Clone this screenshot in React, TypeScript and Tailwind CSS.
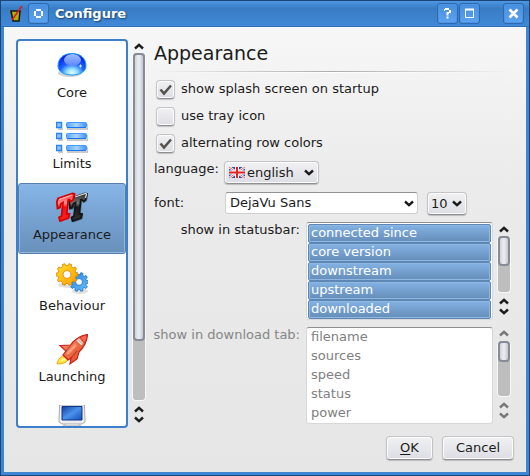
import type { ReactNode } from "react";

const raised =
  "rounded-[4px] border border-[#c4c4c6] border-b-[#8f8f94] bg-linear-to-b from-[#f1f1f3] to-[#dddee4] shadow-[inset_0_0_0_1px_#fbfbfc,0_1px_1px_#0003]";

function Chevron({ up = false, className = "" }: { up?: boolean; className?: string }) {
  return (
    <svg viewBox="0 0 10 7" className={`h-[7px] w-[10px] shrink-0 ${className}`} fill="none" stroke="currentColor" strokeWidth="2.4" aria-hidden="true">
      <path d={up ? "M1 5.5 5 1.8 9 5.5" : "M1 1.5 5 5.2 9 1.5"} />
    </svg>
  );
}

function ScrollBar({ thumb, disabled = false }: { thumb: number; disabled?: boolean }) {
  const tone = disabled ? "text-[#777]" : "text-[#1c1c1c]";
  return (
    <div className={`flex w-[14px] shrink-0 flex-col items-center ${tone}`} aria-hidden="true">
      <div className="flex h-[14px] shrink-0 items-center">
        <Chevron up />
      </div>
      <div className="min-h-0 w-full flex-1 rounded-[4px] border border-t-0 border-[#f8f8f8] bg-[#bebebe]">
        <div
          className="w-full rounded-[4px] border-2 border-[#878b95] bg-linear-to-r from-[#d0d3da] via-[#eceef2] to-[#c3c7d0]"
          style={{ height: `${thumb}%` }}
        />
      </div>
      <div className="flex h-[27px] shrink-0 flex-col items-center justify-between py-[5px]">
        <Chevron up />
        <Chevron />
      </div>
    </div>
  );
}

function CoreIcon() {
  return (
    <svg viewBox="0 0 32 32" className="size-8">
      <defs>
        <radialGradient id="orb" cx=".5" cy=".9" r=".8">
          <stop offset="0" stopColor="#e8ffff" />
          <stop offset=".25" stopColor="#8cdcff" />
          <stop offset=".55" stopColor="#1a62ff" />
          <stop offset="1" stopColor="#0a1ce8" />
        </radialGradient>
        <linearGradient id="orbShine" x2="0" y2="1">
          <stop stopColor="#b9dcff" />
          <stop offset="1" stopColor="#6687ff" />
        </linearGradient>
      </defs>
      <ellipse cx="14" cy="23" rx="12" ry="4" fill="#999" opacity=".45" />
      <path d="M2 16C2 8 8 3.500 16 3.500s14 4.500 14 12.500c0 6-7 9-14 9S2 22 2 16Z" fill="url(#orb)" stroke="#1599f5" />
      <ellipse cx="16.500" cy="10" rx="8.500" ry="6" fill="url(#orbShine)" opacity=".85" />
      <path d="M23 16h3M24.500 14.500v3" stroke="#d8e8ff" />
    </svg>
  );
}

function LimitsIcon() {
  return (
    <svg viewBox="0 0 32 32" className="size-8">
      <defs>
        <linearGradient id="bar" x2="1" y2="0">
          <stop stopColor="#58a8ff" />
          <stop offset=".5" stopColor="#a9d4ff" />
          <stop offset="1" stopColor="#3f92fb" />
        </linearGradient>
      </defs>
      {[1, 12, 24].map((y) => (
        <g key={y}>
          <path d={`M2 ${y + 7}h5M11 ${y + 7}h21v-5`} stroke="#bbb" strokeWidth="1.500" fill="none" />
          <rect x=".5" y={y + 0.5} width="5" height="5" fill="#8cc4ff" stroke="#2685fa" strokeWidth="1.500" />
          <rect x="10.500" y={y + 0.5} width="20" height="5" rx="1" fill="url(#bar)" stroke="#459afc" />
          <path d={`M11 ${y + 5.5}h19`} stroke="#1a74f2" />
        </g>
      ))}
    </svg>
  );
}

function AppearanceIcon() {
  const tee = "M.8 10 2 6.500 16.500 1.500 18.500 2 17 8 15 9.500 13.500 7.500 12.200 8 10.800 22 13.500 22 12.500 26 4 29 3 25.500 5.500 24 7 10.500 5 11.500 4 15.500 1.500 16.500Z";
  return (
    <svg viewBox="0 0 32 32" className="size-8">
      <defs>
        <linearGradient id="redTee" x2="0" y2="1">
          <stop stopColor="#ff4040" />
          <stop offset=".35" stopColor="#ff8d8d" />
          <stop offset=".5" stopColor="#ee1414" />
          <stop offset="1" stopColor="#ff2020" />
        </linearGradient>
        <linearGradient id="blackTee" x2="0" y2="1">
          <stop stopColor="#2a2a2a" />
          <stop offset=".35" stopColor="#777" />
          <stop offset=".5" stopColor="#181818" />
          <stop offset="1" stopColor="#333" />
        </linearGradient>
      </defs>
      <path d={tee} transform="translate(13.500 1)" fill="#234" opacity=".45" stroke="#234" />
      <path d={tee} transform="translate(12.500 0)" fill="url(#blackTee)" stroke="#151515" strokeWidth="1.800" />
      <path d="m19 5 10.500-3.500 1 .5-1 4" fill="none" stroke="#ddd" strokeWidth="1.300" />
      <path d={tee} fill="url(#redTee)" stroke="#d80000" strokeWidth="1.800" />
      <path d="m3 7.500 13-4.500" stroke="#ffb5b5" strokeWidth="1.200" />
    </svg>
  );
}

function gearPath(r: number, teeth: number) {
  const step = (Math.PI * 2) / teeth;
  const points: string[] = [];
  for (let i = 0; i < teeth; i++) {
    for (const [offset, radius] of [
      [-0.3, r - 2],
      [-0.2, r],
      [0.2, r],
      [0.3, r - 2],
    ]) {
      const a = (i + offset) * step;
      points.push(`${(Math.cos(a) * radius).toFixed(2)} ${(Math.sin(a) * radius).toFixed(2)}`);
    }
  }
  return `M${points.join("L")}Z`;
}

function Gear({ x, y, r, hole, fill, edge }: { x: number; y: number; r: number; hole: number; fill: string; edge: string }) {
  return (
    <g transform={`translate(${x} ${y})`}>
      <path
        d={`${gearPath(r, 10)}M${hole} 0A${hole} ${hole} 0 1 0 ${-hole} 0A${hole} ${hole} 0 1 0 ${hole} 0Z`}
        fill={fill}
        fillRule="evenodd"
        stroke={edge}
        strokeWidth=".9"
      />
    </g>
  );
}

function BehaviourIcon() {
  return (
    <svg viewBox="0 0 32 32" className="size-8">
      <defs>
        <linearGradient id="gold" x2="1" y2="1">
          <stop stopColor="#ffe02a" />
          <stop offset="1" stopColor="#ff9d00" />
        </linearGradient>
        <linearGradient id="azure" x2="1" y2="1">
          <stop stopColor="#1f7fe0" />
          <stop offset="1" stopColor="#6cc4ff" />
        </linearGradient>
      </defs>
      <ellipse cx="13" cy="22" rx="11" ry="3" fill="#999" opacity=".3" />
      <ellipse cx="24" cy="28" rx="8" ry="3" fill="#999" opacity=".3" />
      <Gear x={23} y={19} r={9.5} hole={3.500} fill="url(#azure)" edge="#2676c8" />
      <Gear x={11} y={11.500} r={11} hole={4} fill="url(#gold)" edge="#e08a00" />
    </svg>
  );
}

function LaunchingIcon() {
  return (
    <svg viewBox="0 0 32 32" className="size-8">
      <defs>
        <linearGradient id="hull" x2="1" y2="1">
          <stop stopColor="#ff9c70" />
          <stop offset="1" stopColor="#d93a18" />
        </linearGradient>
      </defs>
      <path d="M1 30C2 25 5 22 8 22l4 4c-2 3-6 4-11 4Z" fill="#ffe640" stroke="#f5a018" />
      <path d="m4 27 5-3 1 2Z" fill="#fffbc0" />
      <path d="M4 11.500 14.500 11C19 5 24 1.500 31.500.5 31 8 28 13 23 18l-2 7-7 5 1-6-3 2-5-5 3-4Z" fill="url(#hull)" stroke="#cc1f18" strokeWidth="1.200" />
      <path d="M24.500 3c2-1 4-1.800 6.500-2C31 5 29.500 7 28 9Z" fill="#ff6850" stroke="#cf281c" strokeWidth=".8" />
      <path d="m20.500 6.500 5 5 2-2.500-4.500-4.500Z" fill="#e9e3e0" />
      <path d="m22 5.500 4.500 4.500" stroke="#a9a4a4" />
      <path d="m11 20 9-9" stroke="#ff9e7c" strokeWidth="2.500" />
      <path d="m14.500 11.500-5 6M15 24l6-7" fill="none" stroke="#a82c18" strokeWidth=".9" />
    </svg>
  );
}

function ScreenIcon() {
  return (
    <svg viewBox="0 0 32 32" className="size-8">
      <defs>
        <linearGradient id="glass" x2="1" y2="1">
          <stop stopColor="#123f9d" />
          <stop offset=".5" stopColor="#4c92ec" />
          <stop offset="1" stopColor="#124bb8" />
        </linearGradient>
      </defs>
      <path d="M3.500 0h25l.5 17-3 2H6l-3-2Z" fill="#eee" stroke="#aaa" />
      <path d="M6 1.500h20V15H6Z" fill="url(#glass)" stroke="#0e3688" />
      <path d="m10 19-3 2h18l-3-2" fill="#ddd" stroke="#bbb" />
    </svg>
  );
}

function TitleButton({ label, children }: { label: string; children: ReactNode }) {
  return (
    <button
      type="button"
      aria-label={label}
      className="flex size-[21px] items-center justify-center rounded-[3px] border border-[#2c69ad] bg-linear-to-b from-[#468ede] to-[#5ca2ef] text-white shadow-[inset_0_0_0_1px_#4d94e4]"
    >
      <svg viewBox="0 0 11 11" className="size-[11px]" fill="none" stroke="currentColor" strokeWidth="2">
        {children}
      </svg>
    </button>
  );
}

function Check({ label, checked = false }: { label: string; checked?: boolean }) {
  return (
    <label className="flex h-[27px] items-center gap-[6px] pl-[2px]">
      <span className="relative mt-[2px] flex size-[19px]">
        <input type="checkbox" defaultChecked={checked} className={`peer size-full appearance-none ${raised}`} />
        <svg
          viewBox="0 0 19 19"
          className="pointer-events-none absolute inset-0 hidden size-full peer-checked:block"
          fill="none"
          stroke="#55504c"
          strokeWidth="2.500"
          aria-hidden="true"
        >
          <path d="m4.500 9.500 3.500 4 7-8" />
        </svg>
      </span>
      {label}
    </label>
  );
}

function ListRow({ id, label, items, selected = false }: { id: string; label: string; items: string[]; selected?: boolean }) {
  return (
    <div className="flex min-h-0 flex-1 gap-1">
      <label
        htmlFor={id}
        className={`mr-[2px] flex w-[146px] shrink-0 justify-end leading-4 whitespace-nowrap ${selected ? "" : "text-[#858585]"}`}
      >
        {label}
      </label>
      <select
        id={id}
        multiple
        disabled={!selected}
        defaultValue={selected ? items : []}
        className="h-full min-w-0 flex-1 appearance-none overflow-hidden rounded-[3px] border border-[#d8d8d8] border-t-[#8f8f8f] bg-white p-px opacity-100 outline-none [scrollbar-width:none]"
      >
        {items.map((item) => (
          <option
            key={item}
            value={item}
            className={
              selected
                ? "h-[19px] min-h-0 rounded-[2px] border border-[#5d88b6] bg-linear-to-b from-[#83b2e4] to-[#658db8] px-[2px] py-0 leading-[17px] text-white shadow-[inset_0_0_0_1px_#8fb7e2]"
                : "h-[19px] min-h-0 px-[3px] py-0 leading-[19px] text-[#808080]"
            }
          >
            {item}
          </option>
        ))}
      </select>
      <ScrollBar thumb={selected ? 54 : 39} disabled={!selected} />
    </div>
  );
}

const pages = [
  { name: "Core", icon: <CoreIcon /> },
  { name: "Limits", icon: <LimitsIcon /> },
  { name: "Appearance", icon: <AppearanceIcon /> },
  { name: "Behaviour", icon: <BehaviourIcon /> },
  { name: "Launching", icon: <LaunchingIcon /> },
];

export default function App() {
  return (
    <div className="flex h-screen flex-col border border-[#1c4474] bg-[#3f86d2] font-['DejaVu_Sans',sans-serif] text-[13px] leading-4 text-[#1b1b1b]">
      <header className="flex h-[26px] shrink-0 items-center gap-px border-b border-[#2f6fb5] bg-linear-to-b from-[#4d97e4] via-[#397cc3] via-30% to-[#4089d7] pr-[5px] pl-2">
        <svg viewBox="0 0 14 18" className="mr-1 h-[18px] w-[14px]" aria-hidden="true">
          <path d="M2 6h9l-1 10H4Z" fill="#b8b000" stroke="#141414" strokeWidth="1.500" />
          <path d="M3 15 13 1" stroke="#e01818" strokeWidth="1.500" />
        </svg>
        <TitleButton label="Window menu">
          <path d="M3 2h5M9 3v5M8 9H3M2 8V3" />
        </TitleButton>
        <h1 className="flex-1 pl-[5px] font-bold text-white [text-shadow:1px_1px_2px_#17406f]">Configure</h1>
        <TitleButton label="Help">
          <path d="M2 2h1M3 1h4M8 2v3M7 5H5.500v2.500M4.500 9.500h2" />
        </TitleButton>
        <TitleButton label="Maximize">
          <path d="M1.500 1.500h8v8h-8Z" strokeWidth="1" />
          <path d="M1 1.500h9" />
        </TitleButton>
        <span className="w-[21px]" />
        <TitleButton label="Close">
          <path d="m1.500 1.500 8 8M9.500 1.500l-8 8" strokeWidth="2.600" />
        </TitleButton>
      </header>

      <main className="mx-[3px] mb-[3px] flex min-h-0 flex-1 flex-col bg-linear-to-b from-[#f7f7f7] via-[#ebebeb] via-35% to-[#e6e6e6] px-3 pt-3 pb-3">
        <div className="flex min-h-0 flex-1">
          <nav className="w-28 shrink-0 overflow-hidden rounded-[4px] border-2 border-[#3d7fcb] bg-white" aria-label="Pages">
            {pages.map(({ name, icon }) => (
              <button
                key={name}
                type="button"
                className={`flex h-[71px] w-full flex-col items-center gap-[3px] border pt-2 ${
                  name === "Appearance"
                    ? "rounded-[3px] border-[#5580ad] bg-linear-to-b from-[#86b5e7] to-[#6890bb] shadow-[inset_0_0_0_1px_#8fb6df]"
                    : "border-transparent"
                }`}
              >
                {icon}
                {name}
              </button>
            ))}
            <button type="button" aria-label="Display" className="flex h-[71px] w-full justify-center border border-transparent pt-2">
              <ScreenIcon />
            </button>
          </nav>
          <div className="ml-1 flex">
            <ScrollBar thumb={83} />
          </div>

          <section className="ml-2 flex min-w-0 flex-1 flex-col pr-[3px]">
            <h2 className="h-8 text-[19px] leading-7">Appearance</h2>
            <div className="h-px shrink-0 bg-linear-to-r from-transparent via-[#adadad] to-transparent" />
            <div className="h-px shrink-0 bg-linear-to-r from-transparent via-white to-transparent" />
            <div className="pt-[2px]">
              <Check label="show splash screen on startup" checked />
              <Check label="use tray icon" />
              <Check label="alternating row colors" checked />
            </div>
            <div className="flex h-[36px] pt-[5px]">
              <label htmlFor="language" className="w-[70px] shrink-0">
                language:
              </label>
              <div className="relative h-[23px]">
                <select id="language" className={`h-full w-[95px] appearance-none pl-[22px] text-[13px] ${raised}`}>
                  <option>english</option>
                </select>
                <svg viewBox="0 0 16 11" className="pointer-events-none absolute top-[6px] left-[5px] h-[11px] w-4" aria-hidden="true">
                  <path d="M0 0h16v11H0Z" fill="#294caa" />
                  <path d="m0 0 16 11M16 0 0 11" stroke="#fff" strokeWidth="2.500" />
                  <path d="m0 0 16 11M16 0 0 11" stroke="#e33" strokeWidth=".8" />
                  <path d="M8 0v11M0 5.500h16" stroke="#fff" strokeWidth="4" />
                  <path d="M8 0v11M0 5.500h16" stroke="#e02020" strokeWidth="2" />
                </svg>
                <Chevron className="pointer-events-none absolute top-[8px] right-[5px]" />
              </div>
            </div>
            <div className="flex h-[30px] shrink-0">
              <label htmlFor="font" className="w-[71px] shrink-0 pt-[3px]">
                font:
              </label>
              <div className="relative h-[22px] w-[193px]">
                <select
                  id="font"
                  className="size-full appearance-none rounded-[3px] border border-[#d0d0d0] border-t-[#929292] bg-white pl-1 text-[13px]"
                >
                  <option>DejaVu Sans</option>
                </select>
                <Chevron className="pointer-events-none absolute top-[8px] right-1" />
              </div>
              <div className="relative ml-[9px] h-[23px] w-10">
                <select aria-label="font size" className={`size-full appearance-none pl-[3px] text-[13px] ${raised}`}>
                  <option>10</option>
                </select>
                <Chevron className="pointer-events-none absolute top-[8px] right-[5px]" />
              </div>
            </div>
            <div className="flex min-h-0 flex-1 flex-col gap-[7px] pb-1">
              <ListRow
                id="statusbar"
                label="show in statusbar:"
                selected
                items={["connected since", "core version", "downstream", "upstream", "downloaded"]}
              />
              <ListRow id="downloads" label="show in download tab:" items={["filename", "sources", "speed", "status", "power"]} />
            </div>
          </section>
        </div>
        <footer className="flex shrink-0 justify-end gap-[9px] pt-2">
          <button type="button" className={`h-6 w-[47px] ${raised}`}>
            <span className="underline underline-offset-2">O</span>K
          </button>
          <button type="button" className={`h-6 w-[72px] ${raised}`}>
            Cancel
          </button>
        </footer>
      </main>
    </div>
  );
}
